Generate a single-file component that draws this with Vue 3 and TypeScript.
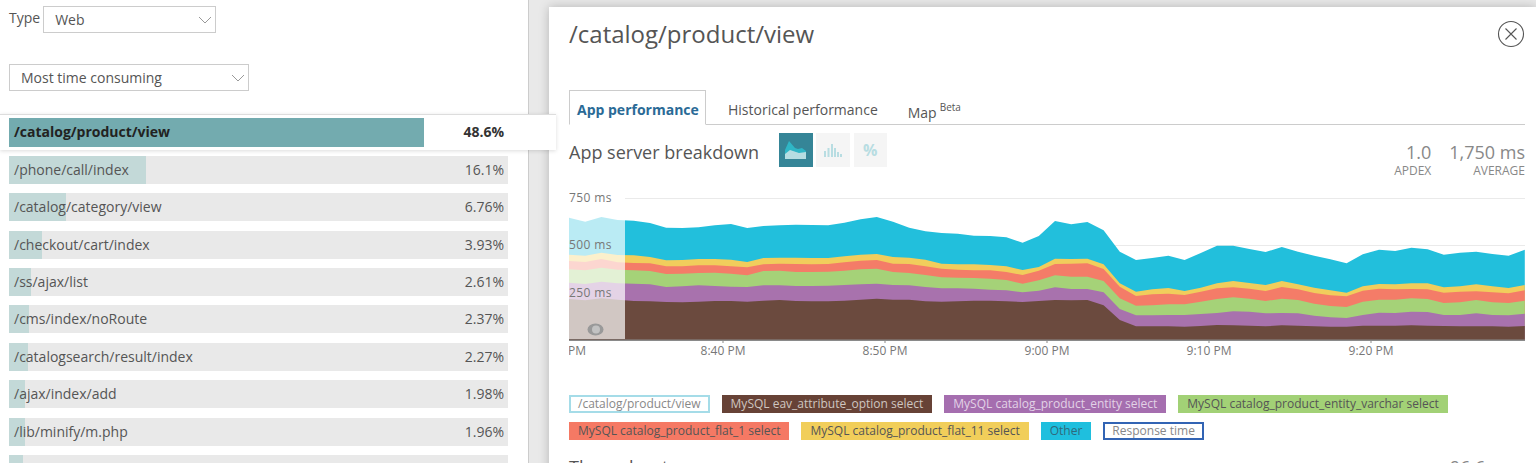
<script setup lang="ts">
interface Row {
  name: string
  pct: string
  fill: number
}

const selected: Row = { name: '/catalog/product/view', pct: '48.6%', fill: 415 }

const rows: Row[] = [
  { name: '/phone/call/index', pct: '16.1%', fill: 137 },
  { name: '/catalog/category/view', pct: '6.76%', fill: 57 },
  { name: '/checkout/cart/index', pct: '3.93%', fill: 33 },
  { name: '/ss/ajax/list', pct: '2.61%', fill: 22 },
  { name: '/cms/index/noRoute', pct: '2.37%', fill: 20 },
  { name: '/catalogsearch/result/index', pct: '2.27%', fill: 19 },
  { name: '/ajax/index/add', pct: '1.98%', fill: 16 },
  { name: '/lib/minify/m.php', pct: '1.96%', fill: 16 },
  { name: '', pct: '', fill: 14 },
]

// top edge of each stacked layer, one value per sample (in thirds of a pixel)
const layers = [
  {
    color: '#22bfdc',
    tops: [
      98, 110, 96, 105, 107, 114, 128, 129, 127, 121, 117, 129, 123, 121, 119, 120, 121, 113, 103, 96, 110,
      128, 139, 144, 146, 152, 153, 157, 173, 153, 108, 118, 111, 136, 200, 225, 219, 212, 225, 204, 182, 182,
      192, 201, 186, 200, 212, 223, 235, 208, 194, 198, 188, 193, 209, 203, 200, 207, 212, 194,
    ],
  },
  {
    color: '#f1cd5c',
    tops: [
      209, 212, 203, 210, 211, 216, 226, 225, 222, 222, 224, 231, 219, 218, 218, 219, 219, 214, 209, 207, 216,
      218, 224, 236, 238, 238, 240, 244, 255, 246, 221, 222, 221, 238, 295, 320, 313, 309, 318, 308, 295, 288,
      294, 300, 288, 298, 308, 316, 323, 304, 297, 298, 295, 295, 307, 304, 298, 304, 309, 300,
    ],
  },
  {
    color: '#f47c68',
    tops: [
      228, 231, 222, 232, 234, 235, 244, 244, 241, 241, 244, 247, 238, 236, 237, 238, 237, 232, 227, 225, 236,
      237, 244, 251, 254, 256, 256, 261, 270, 257, 237, 236, 235, 252, 305, 333, 328, 326, 330, 320, 310, 307,
      311, 318, 306, 313, 324, 331, 334, 317, 311, 313, 312, 313, 323, 320, 319, 322, 325, 316,
    ],
  },
  {
    color: '#a5d278',
    tops: [
      253, 256, 248, 254, 256, 258, 267, 266, 264, 263, 266, 271, 258, 257, 261, 261, 260, 257, 253, 251, 261,
      264, 270, 277, 278, 279, 281, 285, 296, 286, 271, 275, 275, 288, 340, 362, 361, 358, 358, 350, 342, 337,
      341, 348, 341, 345, 356, 363, 366, 350, 344, 344, 340, 342, 354, 352, 345, 352, 354, 347,
    ],
  },
  {
    color: '#a872ad',
    tops: [
      293, 297, 290, 295, 296, 298, 306, 304, 301, 303, 305, 306, 301, 301, 303, 303, 302, 300, 298, 296, 300,
      301, 306, 310, 310, 311, 314, 316, 322, 317, 307, 312, 312, 322, 372, 391, 391, 390, 390, 387, 384, 379,
      380, 385, 384, 385, 392, 397, 399, 390, 383, 384, 380, 381, 390, 390, 385, 390, 391, 386,
    ],
  },
  {
    color: '#6b4a3e',
    tops: [
      342, 346, 340, 344, 348, 349, 351, 352, 350, 348, 348, 350, 347, 345, 348, 349, 349, 347, 344, 341, 344,
      344, 349, 350, 349, 347, 347, 349, 351, 348, 345, 346, 345, 361, 405, 424, 424, 424, 425, 423, 420, 421,
      422, 424, 421, 422, 424, 425, 425, 422, 422, 422, 421, 422, 423, 424, 424, 424, 425, 423,
    ],
  },
]

const areas = layers.map((layer) => {
  const line = layer.tops.map((v, i) => `${(i * 16.2).toFixed(1)},${(v / 3).toFixed(1)}`).join(' L')
  return { color: layer.color, d: `M0,155 L${line} L955.8,155 Z` }
})

const gridLines = [13, 60, 108]
const yLabels = [
  { text: '750 ms', y: 17 },
  { text: '500 ms', y: 64 },
  { text: '250 ms', y: 112 },
]
const xLabels = [
  { text: '8:40 PM', x: 154 },
  { text: '8:50 PM', x: 316 },
  { text: '9:00 PM', x: 478 },
  { text: '9:10 PM', x: 640 },
  { text: '9:20 PM', x: 802 },
]

const legendRows = [
  [
    { text: '/catalog/product/view', cls: 'isOutlineLight' },
    { text: 'MySQL eav_attribute_option select', cls: 'isBrown' },
    { text: 'MySQL catalog_product_entity select', cls: 'isPurple' },
    { text: 'MySQL catalog_product_entity_varchar select', cls: 'isGreen' },
  ],
  [
    { text: 'MySQL catalog_product_flat_1 select', cls: 'isRed' },
    { text: 'MySQL catalog_product_flat_11 select', cls: 'isYellow' },
    { text: 'Other', cls: 'isCyan' },
    { text: 'Response time', cls: 'isOutlineBlue' },
  ],
]
</script>

<template>
  <div class="page">
    <aside class="sidebar">
      <div class="filter">
        <label class="filter__label">Type</label>
        <div class="select select--type">
          <span>Web</span>
          <svg class="select__chevron" width="14" height="8" viewBox="0 0 14 8">
            <path d="M1 1l6 6 6-6" fill="none" stroke="#999" stroke-width="1" />
          </svg>
        </div>
      </div>
      <div class="select select--sort">
        <span>Most time consuming</span>
        <svg class="select__chevron" width="14" height="8" viewBox="0 0 14 8">
          <path d="M1 1l6 6 6-6" fill="none" stroke="#999" stroke-width="1" />
        </svg>
      </div>

      <div class="list">
        <div class="picked">
          <div class="picked__bar" :style="{ width: selected.fill + 'px' }"></div>
          <span class="row__name">{{ selected.name }}</span>
          <span class="row__pct">{{ selected.pct }}</span>
        </div>
        <div v-for="(row, i) in rows" :key="i" class="row">
          <div class="row__fill" :style="{ width: row.fill + 'px' }"></div>
          <span class="row__name">{{ row.name }}</span>
          <span class="row__pct">{{ row.pct }}</span>
        </div>
      </div>
    </aside>

    <main class="panel">
      <header class="panel__head">
        <h1 class="panel__title">/catalog/product/view</h1>
        <svg class="panel__close" width="28" height="28" viewBox="0 0 28 28">
          <circle cx="14" cy="14" r="12.5" fill="none" stroke="#555" stroke-width="1.1" />
          <path d="M8.5 8.5l11 11M19.5 8.5l-11 11" fill="none" stroke="#555" stroke-width="1.1" />
        </svg>
      </header>

      <nav class="tabs">
        <a class="tabs__item isActive">App performance</a>
        <a class="tabs__item">Historical performance</a>
        <a class="tabs__item tabs__item--map">Map<sup>Beta</sup></a>
      </nav>

      <section class="breakdown">
        <h2 class="breakdown__title">App server breakdown</h2>
        <div class="modes">
          <div class="modes__btn isOn">
            <svg width="21" height="18" viewBox="0 0 21 18">
              <path d="M0 9L4 0l6 7 3 1 4-1 4 3v5H0z" fill="#2fb6c6" />
              <path d="M0 13l5-4 9 3 7-1v7H0z" fill="#b5dde2" />
            </svg>
          </div>
          <div class="modes__btn">
            <svg width="18" height="13" viewBox="0 0 18 13" fill="#b8dde2">
              <rect x="0" y="7" width="2" height="6" />
              <rect x="3.5" y="4" width="2" height="9" />
              <rect x="7" y="0" width="2" height="13" />
              <rect x="10" y="4" width="2" height="9" />
              <rect x="13" y="8" width="2" height="5" />
              <rect x="16" y="10" width="2" height="3" />
            </svg>
          </div>
          <div class="modes__btn modes__btn--pct">%</div>
        </div>
        <div class="stats">
          <div class="stat">
            <strong>1.0</strong>
            <span>APDEX</span>
          </div>
          <div class="stat">
            <strong>1,750 ms</strong>
            <span>AVERAGE</span>
          </div>
        </div>
      </section>

      <svg class="chart" width="956" height="175" viewBox="0 0 956 175">
        <line v-for="y in gridLines" :key="y" x1="56" x2="956" :y1="y + 0.5" :y2="y + 0.5" stroke="#eaeaea" />
        <path v-for="area in areas" :key="area.color" :d="area.d" :fill="area.color" />
        <rect x="0" y="0" width="56" height="154" fill="#fff" fill-opacity="0.69" />
        <ellipse cx="26.5" cy="144.5" rx="8" ry="6" fill="#999" />
        <circle cx="27" cy="144.5" r="4" fill="#c2c2c2" />
        <rect x="0" y="154.5" width="956" height="1.5" fill="#8a8a8a" />
        <rect v-for="l in xLabels" :key="l.x" :x="l.x - 0.5" y="156" width="1" height="2" fill="#8a8a8a" />
        <text v-for="l in yLabels" :key="l.text" x="0" :y="l.y" class="chart__y">{{ l.text }}</text>
        <text x="-1" y="170" class="chart__x">PM</text>
        <text v-for="l in xLabels" :key="l.text" :x="l.x" y="170" text-anchor="middle" class="chart__x">{{ l.text }}</text>
      </svg>

      <div class="legend">
        <div v-for="(line, i) in legendRows" :key="i" class="legend__row">
          <span v-for="item in line" :key="item.text" class="legend__item" :class="item.cls">{{ item.text }}</span>
        </div>
      </div>

      <div class="throughput">
        <span>Throughput</span>
        <span class="throughput__val">96.6 rpm</span>
      </div>
    </main>
  </div>
</template>

<style>
html,
body {
  margin: 0;
  overflow: hidden;
}
</style>

<style scoped>
.page {
  display: flex;
  height: 463px;
  overflow: hidden;
  background: #e9e9e9;
  font-family: 'Open Sans', sans-serif;
  color: #555;
}

.sidebar {
  position: relative;
  z-index: 2;
  box-sizing: border-box;
  flex: 0 0 529px;
  height: 463px;
  padding: 6px 0 0 9px;
  background: #fff;
  border-right: 1px solid #ccc;
}

.filter {
  display: flex;
  gap: 3px;
  align-items: flex-start;
}

.filter__label {
  font-size: 14px;
  line-height: 24px;
}

.select {
  box-sizing: border-box;
  display: flex;
  align-items: center;
  justify-content: space-between;
  height: 27px;
  padding: 0 3px 0 11px;
  border: 1px solid #ccc;
  font-size: 14px;
}

.select--type {
  width: 173px;
}

.select--sort {
  width: 240px;
  margin-top: 31px;
}

.list {
  display: flex;
  flex-direction: column;
  gap: 9.375px;
  margin-top: 27px;
  width: 499px;
}

.row,
.picked {
  position: relative;
  box-sizing: border-box;
  display: flex;
  align-items: center;
  justify-content: space-between;
  font-size: 14px;
}

.row {
  flex: none;
  height: 28px;
  padding: 0 4px 1px 5px;
  background: #e9e9e9;
}

.row__fill {
  position: absolute;
  top: 0;
  bottom: 0;
  left: 0;
  background: #c3d9d8;
}

.row__name,
.row__pct {
  position: relative;
}

.picked {
  flex: none;
  width: 556px;
  height: 36px;
  margin: -4px 0 -3.4px -9px;
  padding: 0 52px 2px 14px;
  background: #fff;
  font-weight: 700;
  color: #222;
  border-top: 1px solid #ddd;
  box-shadow: 0 1px 4px rgba(0, 0, 0, 0.14);
}

.picked__bar {
  position: absolute;
  top: 3px;
  bottom: 3px;
  left: 9px;
  background: #73abaf;
}

.picked .row__pct {
  color: #333;
}

.panel {
  box-sizing: border-box;
  flex: none;
  width: 987px;
  height: 500px;
  margin: 7px 0 0 20px;
  padding: 0 11px 0 20px;
  background: #fff;
  box-shadow: 0 0 10px rgba(0, 0, 0, 0.22);
}

.panel__head {
  display: flex;
  align-items: center;
  justify-content: space-between;
  height: 54px;
}

.panel__title {
  margin: 0 0 2px;
  font-size: 24px;
  font-weight: 400;
  line-height: 33px;
}

.tabs {
  display: flex;
  height: 35px;
  margin-top: 29px;
  box-sizing: border-box;
  border-bottom: 1px solid #ccc;
  font-size: 14px;
}

.tabs__item {
  box-sizing: border-box;
  height: 35px;
  padding: 0 7px;
  line-height: 40px;
  margin-right: 16px;
}

.tabs__item.isActive {
  width: 137px;
  margin-right: 15px;
  border: 1px solid #ccc;
  border-bottom: 1px solid #fff;
  line-height: 38px;
  font-weight: 700;
  color: #2a6a96;
  white-space: nowrap;
}

.tabs__item--map {
  padding-top: 3px;
}

.tabs__item--map sup {
  margin-left: 3px;
  font-size: 10px;
  line-height: 0;
  position: relative;
  top: -1px;
}

.breakdown {
  display: flex;
  align-items: flex-start;
  height: 60px;
  padding-top: 8px;
  box-sizing: border-box;
}

.breakdown__title {
  margin: 0 20px 0 0;
  font-size: 18px;
  font-weight: 400;
  line-height: 38px;
  white-space: nowrap;
}

.modes {
  display: flex;
  gap: 3.75px;
}

.modes__btn {
  display: flex;
  align-items: center;
  justify-content: center;
  width: 33.5px;
  height: 34px;
  background: #f5f5f5;
}

.modes__btn.isOn {
  background: #358597;
}

.modes__btn--pct {
  font-size: 16px;
  font-weight: 700;
  color: #b8dde2;
}

.stats {
  display: flex;
  gap: 18px;
  margin-left: auto;
  padding-top: 7px;
}

.stat {
  display: flex;
  flex-direction: column;
  align-items: flex-end;
  color: #888;
}

.stat strong {
  font-size: 18px;
  font-weight: 400;
  line-height: 24px;
}

.stat span {
  font-size: 12px;
  line-height: 14px;
}

.chart {
  display: block;
}

.chart__x,
.chart__y {
  font-family: 'Open Sans', sans-serif;
  font-size: 12px;
  fill: #777;
}

.chart__y {
  letter-spacing: 0.4px;
}

.legend {
  display: flex;
  flex-direction: column;
  gap: 9px;
  margin-top: 35px;
}

.legend__row {
  display: flex;
  gap: 12px;
}

.legend__item {
  box-sizing: border-box;
  height: 18px;
  padding: 0 9px;
  font-size: 12px;
  line-height: 18px;
  white-space: nowrap;
}

.isOutlineLight {
  border: 2px solid #a5dce8;
  padding: 0 7px;
  line-height: 14px;
  color: #888;
}

.isOutlineBlue {
  border: 2px solid #3264b4;
  padding: 0 7px;
  line-height: 14px;
  color: #888;
}

.isBrown {
  background: #674236;
  color: #cfc6c0;
}

.isPurple {
  background: #a56eaf;
  color: #e2d2e6;
}

.isGreen {
  background: #a2d176;
}

.isRed {
  background: #f57964;
}

.isYellow {
  background: #f1ce5a;
}

.isCyan {
  background: #1fbfde;
  color: #2f6a7c;
}

.throughput {
  display: flex;
  justify-content: space-between;
  margin-top: 15px;
  font-size: 18px;
  line-height: 24px;
}

.throughput__val {
  color: #888;
}
</style>
